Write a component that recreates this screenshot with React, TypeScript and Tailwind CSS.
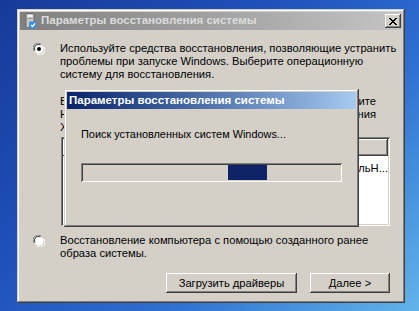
import type { ReactNode } from 'react'

const raised =
  'shadow-[inset_-1px_-1px_#404040,inset_1px_1px_#ffffff,inset_-2px_-2px_#808080,inset_2px_2px_#d4d0c8]'
const sunken =
  'shadow-[inset_1px_1px_#808080,inset_-1px_-1px_#ffffff,inset_2px_2px_#404040,inset_-2px_-2px_#d4d0c8]'
const windowEdge =
  'shadow-[inset_-1px_-1px_#404040,inset_1px_1px_#d4d0c8,inset_-2px_-2px_#808080,inset_2px_2px_#ffffff]'

function Radio({ checked }: { checked?: boolean }) {
  return (
    <svg width="12" height="12" viewBox="0 0 12 12" className="shrink-0">
      <path d="M1 8 A5 5 0 0 1 8 1" fill="none" stroke="#808080" strokeWidth="1" />
      <path d="M4 11 A5 5 0 0 0 11 4" fill="none" stroke="#ffffff" strokeWidth="1" />
      <circle cx="6" cy="6" r="4.5" fill="#ffffff" />
      <path d="M2 7.5 A4 4 0 0 1 7.5 2" fill="none" stroke="#404040" strokeWidth="1" />
      {checked && <circle cx="6" cy="6" r="2" fill="#000000" />}
    </svg>
  )
}

function Button({ width, children }: { width: string; children: ReactNode }) {
  return (
    <div
      className={`flex h-[20px] items-center justify-center bg-[#d4d0c8] text-black ${raised} ${width}`}
    >
      {children}
    </div>
  )
}

function RecoveryIcon() {
  return (
    <svg width="13" height="16" viewBox="0 0 13 16" className="shrink-0">
      <rect x="2" y="0.5" width="8" height="14" rx="1" fill="#c8c8c8" stroke="#6a6a6a" />
      <rect x="3.5" y="2" width="5" height="2" fill="#f2f2f2" />
      <rect x="3.5" y="5" width="5" height="1" fill="#9a9a9a" />
      <rect x="5" y="8.5" width="7" height="7" rx="1" fill="#3b8fe0" />
      <path d="M7 12 l1.5 1.5 l2.5 -3" fill="none" stroke="#ffffff" strokeWidth="1.2" />
    </svg>
  )
}

function SearchDialog() {
  return (
    <div
      className={`absolute left-[64px] top-[89px] flex h-[138px] w-[295px] flex-col bg-[#d4d0c8] p-[3px] ${windowEdge}`}
    >
      <div className="flex h-[17px] items-center bg-gradient-to-r from-[#0a246a] to-[#a6caf0] pl-[2px] text-[11.5px] font-bold text-white">
        Параметры восстановления системы
      </div>
      <div className="ml-[14px] mt-[19px] whitespace-nowrap text-[10.9px] leading-[13px]">
        Поиск установленных систем Windows...
      </div>
      <div className={`ml-[14px] mt-[22px] h-[19px] w-[261px] bg-[#d4d0c8] p-[2px] ${sunken}`}>
        <div className="ml-[145px] h-[15px] w-[39px] bg-[#0f2466]" />
      </div>
    </div>
  )
}

export default function App() {
  return (
    <div className="relative h-[311px] w-[419px] overflow-hidden bg-[linear-gradient(135deg,#173a98_0%,#1f4fb8_35%,#2e6fd0_65%,#62b4ea_100%)] pl-[17px] pt-[9px] font-['Liberation_Sans',Arial,sans-serif] text-[11.2px] text-black">
      <div className={`flex h-[294px] w-[388px] flex-col bg-[#d4d0c8] p-[3px] ${windowEdge}`}>
        <div className="flex h-[18px] items-center bg-gradient-to-r from-[#808080] to-[#c4c4c4] pl-[4px] pr-[1px]">
          <RecoveryIcon />
          <span className="ml-[4px] flex-1 text-[11.5px] font-bold text-[#dcdcdc]">
            Параметры восстановления системы
          </span>
          <div className={`flex h-[14px] w-[16px] items-center justify-center bg-[#d4d0c8] ${raised}`}>
            <svg width="8" height="7" viewBox="0 0 8 7">
              <path d="M0 0 L7 7 M1 0 L8 7 M7 0 L0 7 M8 0 L1 7" stroke="#000" strokeWidth="1" />
            </svg>
          </div>
        </div>

        <div className="flex flex-1 flex-col whitespace-nowrap leading-[13px]">
          <div className="ml-[13px] mt-[12px] flex items-start">
            <div className="mt-[1px]">
              <Radio checked />
            </div>
            <div className="ml-[15px]">
              <div>Используйте средства восстановления, позволяющие устранить</div>
              <div>проблемы при запуске Windows. Выберите операционную</div>
              <div>систему для восстановления.</div>
            </div>
          </div>

          <div className="ml-[40px] mt-[14px] w-[316px]">
            <div className="flex justify-between">
              <span>Выберите</span>
              <span>нажмите</span>
            </div>
            <div className="flex justify-between">
              <span>Нажмите</span>
              <span>расположения</span>
            </div>
            <div className="flex justify-between">
              <span>Хранилище</span>
              <span />
            </div>
          </div>

          <div className={`ml-[41px] mt-[3px] h-[89px] w-[329px] bg-white p-[2px] ${sunken}`}>
            <div className="flex h-[17px] w-[325px] bg-[#d4d0c8] text-[#d4d0c8]">
              <div className={`flex h-full w-[140px] items-center pl-[6px] ${raised}`}>Система</div>
              <div className={`flex h-full w-[60px] items-center pl-[6px] ${raised}`}>Раздел</div>
              <div className={`flex h-full flex-1 items-center pl-[6px] ${raised}`} />
            </div>
            <div className="mt-[4px] flex h-[17px] items-center">
              <span className="w-[140px] pl-[6px]">Windows 7</span>
              <span className="w-[134px] pl-[6px]">(C:) 60000 МБ</span>
              <span>ЛокальН...</span>
            </div>
          </div>

          <div className="ml-[13px] mt-[8px] flex items-start">
            <div className="mt-[1px]">
              <Radio />
            </div>
            <div className="ml-[15px]">
              <div>Восстановление компьютера с помощью созданного ранее</div>
              <div>образа системы.</div>
            </div>
          </div>

          <div className="mr-[12px] mt-[13px] flex justify-end gap-[13px]">
            <Button width="w-[131px]">Загрузить драйверы</Button>
            <Button width="w-[80px]">Далее &gt;</Button>
          </div>
        </div>
      </div>

      <SearchDialog />
    </div>
  )
}
